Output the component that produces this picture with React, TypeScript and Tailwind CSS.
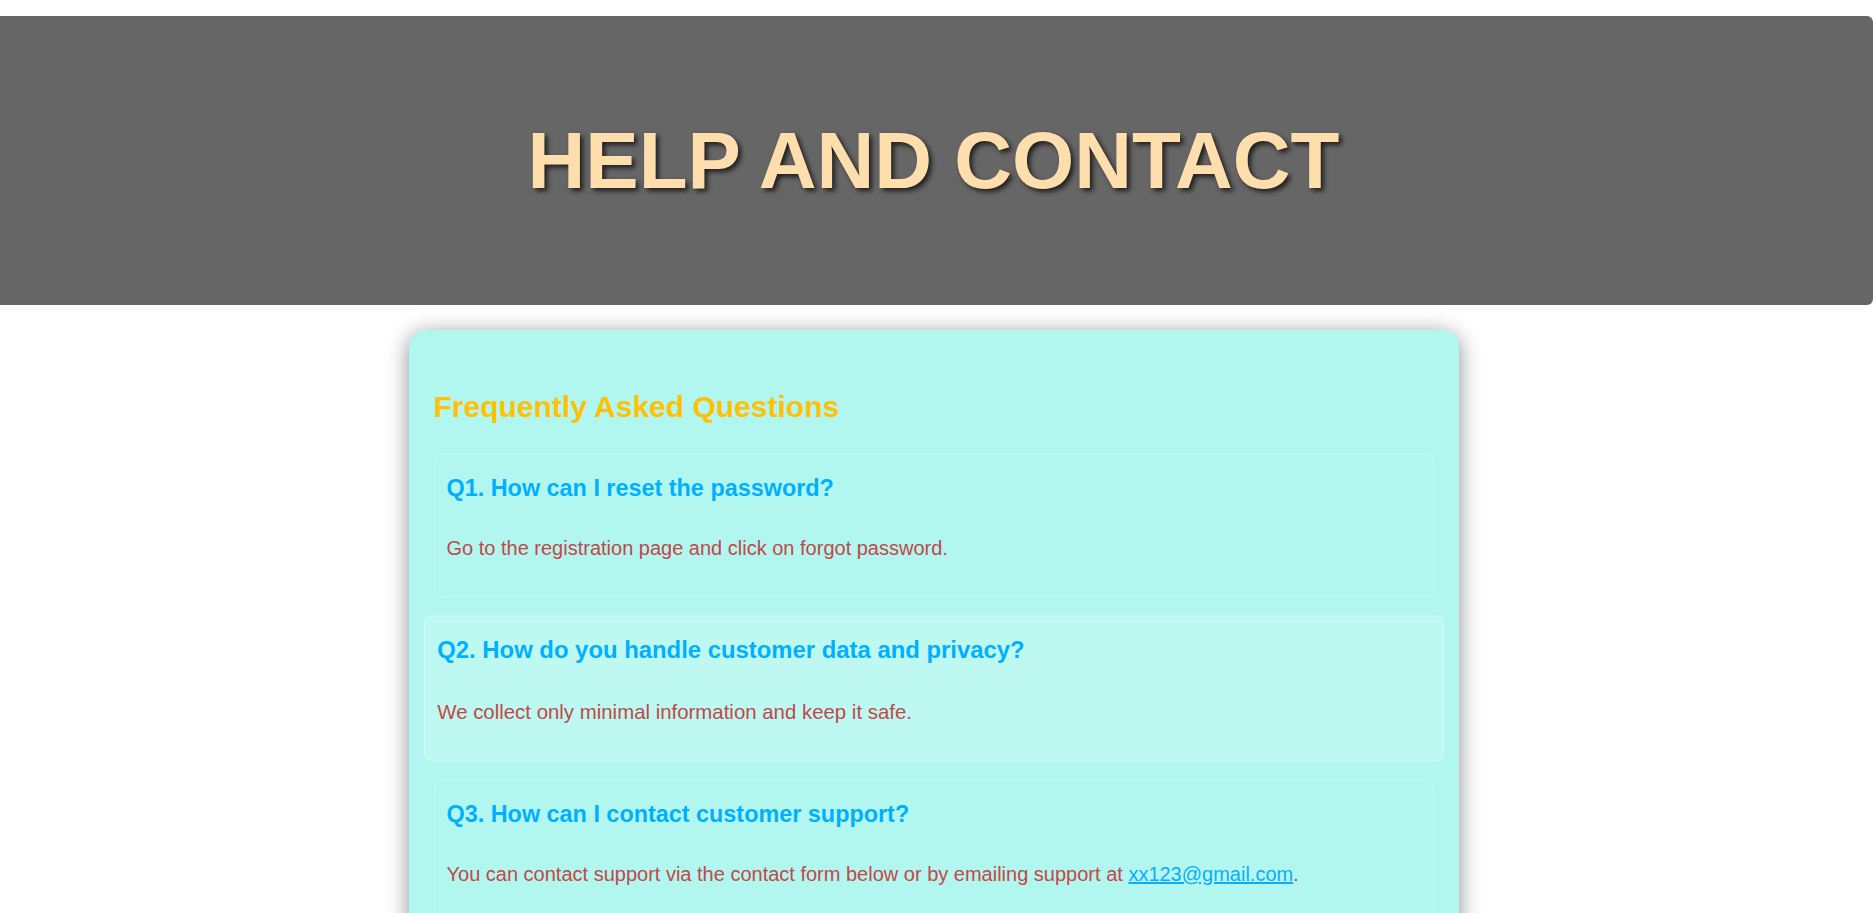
import React from "react";

const faqs = [
  {
    q: "Q1. How can I reset the password?",
    a: <>Go to the registration page and click on forgot password.</>,
    hover: false,
  },
  {
    q: "Q2. How do you handle customer data and privacy?",
    a: <>We collect only minimal information and keep it safe.</>,
    hover: true,
  },
  {
    q: "Q3. How can I contact customer support?",
    a: (
      <>
        You can contact support via the contact form below or by emailing support at{" "}
        <a href="#" className="text-[#0AAEF8] underline">
          xx123@gmail.com
        </a>
        .
      </>
    ),
    hover: false,
  },
];

export default function App() {
  return (
    <div className="min-h-screen bg-white font-['Liberation_Sans',Arial,sans-serif] pb-10">
      <header className="mt-[16px] h-[289px] bg-[#666666] rounded-r-[6px] flex items-center justify-center pr-[6px]">
        <h1 className="text-[80px] font-bold leading-[92px] text-[#FFDEAD] [text-shadow:3px_3px_5px_rgba(0,0,0,0.7)]">
          HELP AND CONTACT
        </h1>
      </header>

      <main className="mt-[25px] w-[1050px] ml-[calc(50%-528px)] rounded-[16px] bg-[#B2F7EF] px-[25px] pt-[60px] pb-[40px] shadow-[0_4px_22px_rgba(0,0,0,0.45)]">
        <h2 className="text-[30px] font-bold leading-[34px] text-[#FFC107] mb-[30px]">
          Frequently Asked Questions
        </h2>
        {faqs.map((f, i) => (
          <div
            key={i}
            className={
              f.hover
                ? "mb-[20px] rounded-[8px] border border-white/30 bg-white/15 px-[12px] pt-[20px] pb-[36px] scale-[1.02]"
                : "mb-[20px] rounded-[8px] border border-white/30 px-[12px] pt-[20px] pb-[36px]"
            }
          >
            <h3 className="text-[23.4px] font-bold leading-[27px] text-[#00B0FF] mb-[35px]">{f.q}</h3>
            <p className="text-[20px] leading-[23px] text-[#C24848]">{f.a}</p>
          </div>
        ))}
        <h2 className="mt-[40px] text-[30px] font-bold leading-[34px] text-[#FFC107]">Contact Us</h2>
      </main>
    </div>
  );
}
